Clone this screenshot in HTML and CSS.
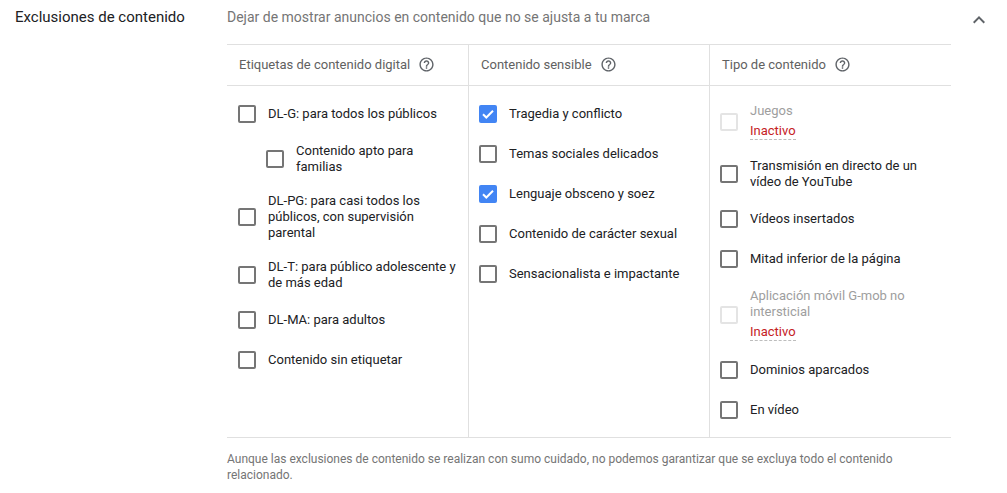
FILE: index.html
```html
<!DOCTYPE html>
<html lang="es">
<head>
  <meta charset="UTF-8">
  <title>Exclusiones de contenido</title>
  <link rel="stylesheet" href="styles.css">
</head>
<body>
  <div class="section">
    <div class="section-title">Exclusiones de contenido</div>

    <div class="section-body">
      <div class="section-desc">Dejar de mostrar anuncios en contenido que no se ajusta a tu marca</div>

      <div class="exclusions">
        <!-- Etiquetas de contenido digital -->
        <div class="col">
          <div class="col-head">
            Etiquetas de contenido digital
            <svg class="help" viewBox="0 0 24 24"><path d="M11 18h2v-2h-2v2zm1-16C6.48 2 2 6.48 2 12s4.480 10 10 10 10-4.48 10-10S17.52 2 12 2zm0 18c-4.41 0-8-3.59-8-8s3.59-8 8-8 8 3.59 8 8-3.59 8-8 8zm0-14c-2.21 0-4 1.790-4 4h2c0-1.1.9-2 2-2s2 .9 2 2c0 2-3 1.75-3 5h2c0-2.25 3-2.5 3-5 0-2.21-1.79-4-4-4z"/></svg>
          </div>
          <div class="options">
            <label class="option"><span class="box"></span><span class="text">DL-G: para todos los públicos</span></label>
            <label class="option nested"><span class="box"></span><span class="text">Contenido apto para familias</span></label>
            <label class="option"><span class="box"></span><span class="text">DL-PG: para casi todos los públicos, con supervisión parental</span></label>
            <label class="option"><span class="box"></span><span class="text">DL-T: para público adolescente y de más edad</span></label>
            <label class="option"><span class="box"></span><span class="text">DL-MA: para adultos</span></label>
            <label class="option"><span class="box"></span><span class="text">Contenido sin etiquetar</span></label>
          </div>
        </div>

        <!-- Contenido sensible -->
        <div class="col">
          <div class="col-head">
            Contenido sensible
            <svg class="help" viewBox="0 0 24 24"><path d="M11 18h2v-2h-2v2zm1-16C6.48 2 2 6.48 2 12s4.48 10 10 10 10-4.48 10-10S17.52 2 12 2zm0 18c-4.41 0-8-3.59-8-8s3.59-8 8-8 8 3.59 8 8-3.59 8-8 8zm0-14c-2.21 0-4 1.79-4 4h2c0-1.1.9-2 2-2s2 .9 2 2c0 2-3 1.75-3 5h2c0-2.25 3-2.5 3-5 0-2.21-1.79-4-4-4z"/></svg>
          </div>
          <div class="options">
            <label class="option"><span class="box checked"><svg viewBox="0 0 18 18"><path d="M4 9.2l3.3 3.3L14 5.8"/></svg></span><span class="text">Tragedia y conflicto</span></label>
            <label class="option"><span class="box"></span><span class="text">Temas sociales delicados</span></label>
            <label class="option"><span class="box checked"><svg viewBox="0 0 18 18"><path d="M4 9.2l3.3 3.3L14 5.8"/></svg></span><span class="text">Lenguaje obsceno y soez</span></label>
            <label class="option"><span class="box"></span><span class="text">Contenido de carácter sexual</span></label>
            <label class="option"><span class="box"></span><span class="text">Sensacionalista e impactante</span></label>
          </div>
        </div>

        <!-- Tipo de contenido -->
        <div class="col">
          <div class="col-head">
            Tipo de contenido
            <svg class="help" viewBox="0 0 24 24"><path d="M11 18h2v-2h-2v2zm1-16C6.48 2 2 6.48 2 12s4.48 10 10 10 10-4.48 10-10S17.52 2 12 2zm0 18c-4.41 0-8-3.59-8-8s3.59-8 8-8 8 3.59 8 8-3.59 8-8 8zm0-14c-2.21 0-4 1.79-4 4h2c0-1.1.9-2 2-2s2 .9 2 2c0 2-3 1.75-3 5h2c0-2.25 3-2.5 3-5 0-2.21-1.79-4-4-4z"/></svg>
          </div>
          <div class="options">
            <label class="option disabled"><span class="box"></span><span class="text">Juegos<span class="status">Inactivo</span></span></label>
            <label class="option"><span class="box"></span><span class="text">Transmisión en directo de un vídeo de YouTube</span></label>
            <label class="option"><span class="box"></span><span class="text">Vídeos insertados</span></label>
            <label class="option"><span class="box"></span><span class="text">Mitad inferior de la página</span></label>
            <label class="option disabled"><span class="box"></span><span class="text">Aplicación móvil G-mob no intersticial<span class="status">Inactivo</span></span></label>
            <label class="option"><span class="box"></span><span class="text">Dominios aparcados</span></label>
            <label class="option"><span class="box"></span><span class="text">En vídeo</span></label>
          </div>
        </div>
      </div>

      <p class="note">Aunque las exclusiones de contenido se realizan con sumo cuidado, no podemos garantizar que se excluya todo el contenido relacionado.</p>
    </div>

    <button class="collapse" type="button" aria-label="Contraer">
      <svg viewBox="0 0 24 24"><path d="M12 8l-6 6 1.41 1.41L12 10.83l4.59 4.58L18 14z"/></svg>
    </button>
  </div>
</body>
</html>
```

FILE: styles.css
```css
body {
  margin: 0;
  background: #fff;
  color: #202124;
  font-family: Roboto, 'Liberation Sans', Arial, sans-serif;
}

.section {
  display: flex;
  align-items: flex-start;
}

.section-title {
  width: 212px;
  padding: 7px 0 0 15px;
  font-size: 15px;
  line-height: 20px;
  color: #202124;
}

.section-body {
  width: 724px;
}

.section-desc {
  padding-top: 7px;
  margin-bottom: 17px;
  font-size: 14px;
  line-height: 20px;
  color: #757575;
}

/* three option columns with shared top/bottom rules */
.exclusions {
  display: grid;
  grid-template-columns: 241px 241px 242px;
  border-top: 1px solid #e0e0e0;
  border-bottom: 1px solid #e0e0e0;
}

.col + .col {
  border-left: 1px solid #e0e0e0;
}

.col-head {
  display: flex;
  align-items: center;
  gap: 8px;
  height: 39px;
  padding: 0 0 1px 12px;
  border-bottom: 1px solid #e0e0e0;
  font-size: 13px;
  color: #616161;
}

.help {
  width: 17px;
  height: 17px;
  fill: #5f6368;
}

.options {
  display: flex;
  flex-direction: column;
  gap: 16px;
  padding: 16px 10px 15px 11px;
}

.col + .col .options {
  padding-left: 10px;
}

.option {
  display: flex;
  align-items: center;
  gap: 12px;
  min-height: 24px;
  font-size: 13px;
  line-height: 16px;
  color: #202124;
  cursor: pointer;
}

.option.nested {
  padding-left: 28px;
}

.option .text {
  display: flex;
  flex-direction: column;
  align-items: flex-start;
  padding: 1px 0;
}

.box {
  flex-shrink: 0;
  box-sizing: border-box;
  width: 18px;
  height: 18px;
  border: 2px solid #757575;
  border-radius: 2px;
}

.box.checked {
  border: none;
  background: #4285f4;
}

.box.checked svg {
  display: block;
  width: 18px;
  height: 18px;
  fill: none;
  stroke: #fff;
  stroke-width: 2;
}

.option.disabled {
  color: #9e9e9e;
  cursor: default;
}

.option.disabled .box {
  border-color: #e4e4e4;
}

.status {
  margin-top: 4px;
  color: #c5221f;
  border-bottom: 1px dashed #bdbdbd;
}

.note {
  margin: 13px 0 0;
  font-size: 12px;
  line-height: 16px;
  color: #757575;
}

.collapse {
  margin: 8px 0 0 16px;
  padding: 0;
  width: 24px;
  height: 24px;
  border: none;
  background: none;
  cursor: pointer;
}

.collapse svg {
  display: block;
  width: 24px;
  height: 24px;
  fill: #5f6368;
}
```
